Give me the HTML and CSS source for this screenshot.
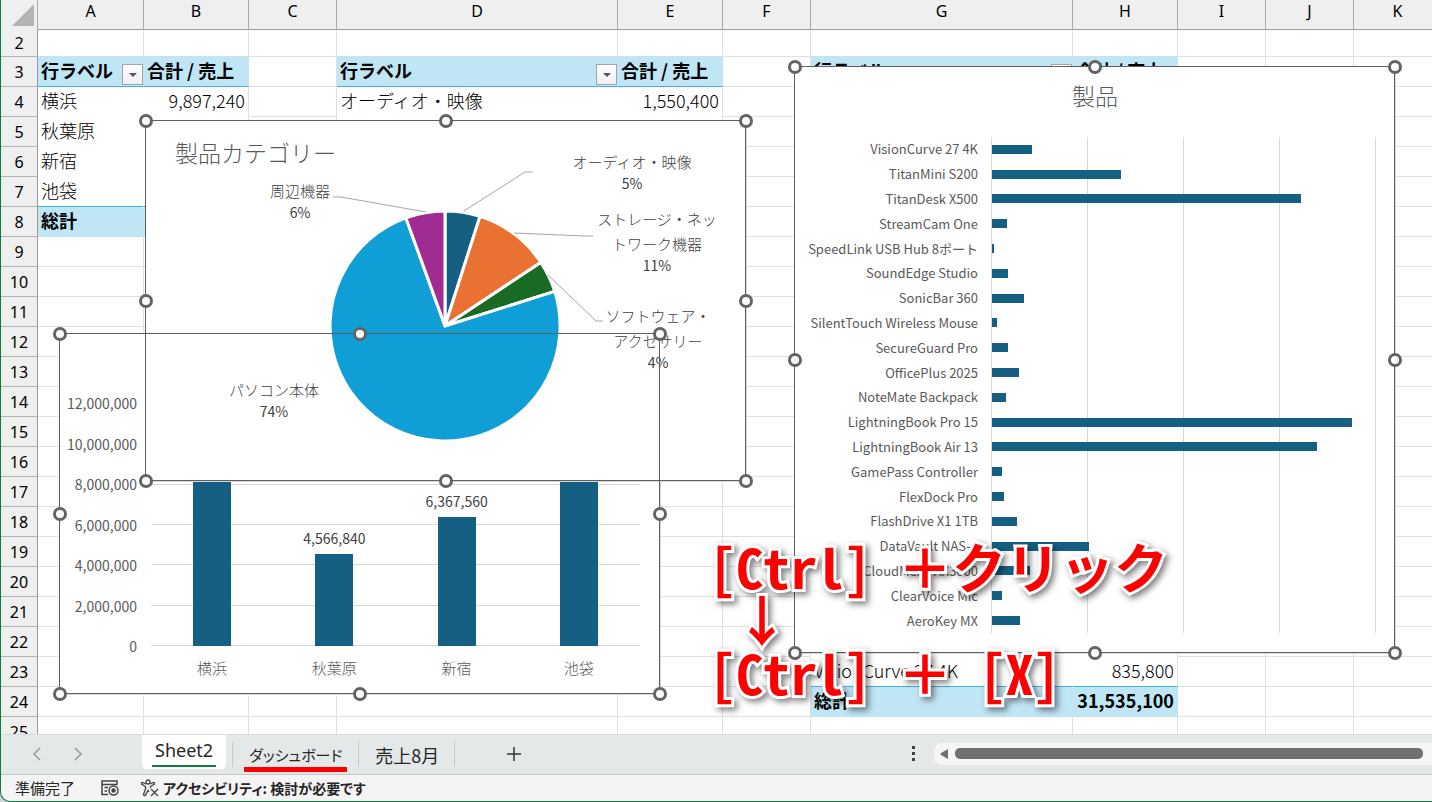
FILE: index.html
```html
<!DOCTYPE html>
<html lang="ja">
<head>
  <meta charset="UTF-8">
  <title>Sheet2</title>
  <meta name="viewport" content="width=device-width, initial-scale=1.0">
  <link rel="stylesheet" href="styles.css">
</head>
<body>
  <div class="app">
    <main class="sheet">
      <table class="cells">
        <colgroup>
          <col class="w-head"><col class="w-a"><col class="w-sum"><col class="w-std"><col class="w-d"><col class="w-sum">
          <col class="w-std"><col class="w-g"><col class="w-sum"><col class="w-std"><col class="w-std"><col class="w-std">
        </colgroup>
        <thead>
          <tr>
            <th class="corner"><svg width="36" height="29"><path d="M33 4V26H11Z" fill="#b4b4b4"/></svg></th>
            <th>A</th><th>B</th><th>C</th><th>D</th><th>E</th><th>F</th><th>G</th><th>H</th><th>I</th><th>J</th><th>K</th>
          </tr>
        </thead>
        <tbody id="rows"></tbody>
      </table>

      <section class="chart chart-store">
        <div class="y-axis">
          <span>12,000,000</span><span>10,000,000</span><span>8,000,000</span><span>6,000,000</span><span>4,000,000</span><span>2,000,000</span><span>0</span>
        </div>
        <div class="plot">
          <div class="h-lines"><i></i><i></i><i></i><i></i><i></i><i></i><i></i></div>
          <div class="columns" id="columns"></div>
        </div>
        <div class="x-axis"><span>横浜</span><span>秋葉原</span><span>新宿</span><span>池袋</span></div>
      </section>

      <section class="chart chart-category">
        <svg class="pie" viewBox="0 0 600 360">
          <g stroke="#fff" stroke-width="3" stroke-linejoin="round">
            <path fill="#156082" d="M299 205V90A115 115 0 0 1 334 95.4Z"/>
            <path fill="#e97132" d="M299 205L334 95.4A115 115 0 0 1 394.8 141.4Z"/>
            <path fill="#196b24" d="M299 205L394.8 141.4A115 115 0 0 1 408.7 170.4Z"/>
            <path fill="#0f9ed5" d="M299 205L408.7 170.4A115 115 0 1 1 259.9 96.9Z"/>
            <path fill="#a02b93" d="M299 205L259.9 96.9A115 115 0 0 1 299 90Z"/>
          </g>
          <g fill="none" stroke="#a6a6a6">
            <path d="M318 90L379 51H387"/>
            <path d="M187 76H195L280 91"/>
            <path d="M368 112L439 115H447"/>
            <path d="M402 154L450 200H457"/>
          </g>
          <text class="chart-title" x="29" y="41">製品カテゴリー</text>
          <g class="pie-label">
            <text x="486" y="47">オーディオ・映像</text><text class="pct" x="486" y="68">5%</text>
            <text x="154" y="76">周辺機器</text><text class="pct" x="154" y="97">6%</text>
            <text x="511" y="104">ストレージ・ネッ</text><text x="511" y="129">トワーク機器</text><text class="pct" x="511" y="150">11%</text>
            <text x="512" y="201">ソフトウェア・</text><text x="512" y="226">アクセサリー</text><text class="pct" x="512" y="247">4%</text>
            <text x="128" y="275">パソコン本体</text><text class="pct" x="128" y="296">74%</text>
          </g>
        </svg>
      </section>

      <section class="chart chart-product">
        <h2 class="chart-title">製品</h2>
        <div class="bars">
          <div class="v-lines"><i></i><i></i><i></i><i></i><i></i></div>
          <div class="bar-list" id="bars"></div>
        </div>
      </section>

      <div class="selection sel-category"></div>
      <div class="selection sel-store"></div>
      <div class="selection sel-product"></div>

      <div class="note">
        <div>[Ctrl] ＋クリック</div>
        <div class="note-arrow">↓</div>
        <div>[Ctrl] ＋ [X]</div>
      </div>
    </main>

    <nav class="tabs">
      <div class="tab-nav">
        <button aria-label="前のシート"><svg width="10" height="14"><path d="M8 1L2 7L8 13"/></svg></button>
        <button aria-label="次のシート"><svg width="10" height="14"><path d="M2 1L8 7L2 13"/></svg></button>
      </div>
      <button class="tab active"><span>Sheet2</span></button>
      <button class="tab marked"><span>ダッシュボード</span></button>
      <button class="tab"><span>売上8月</span></button>
      <button class="add" aria-label="新しいシート"><svg width="16" height="16"><path d="M8 1V15M1 8H15"/></svg></button>
      <div class="scroll">
        <svg width="4" height="15" fill="#444"><path d="M0 0h3v3H0zM0 6h3v3H0zM0 12h3v3H0z"/></svg>
        <div class="track">
          <svg width="9" height="12"><path d="M8 1V11L1 7Q0 6 1 5Z" fill="#707070"/></svg>
          <div class="thumb"></div>
        </div>
      </div>
    </nav>

    <footer class="status">
      <span>準備完了</span>
      <svg class="macro" width="20" height="18" viewBox="0 0 20 18" fill="none" stroke="#444" stroke-width="1.5">
        <path d="M8 15.500H2V2H17V6M2 5.500H17M4.500 8.500H8M4.500 12H7"/>
        <circle cx="13.500" cy="11.500" r="4.500"/><circle cx="13.500" cy="11.500" r="1.500" fill="#444"/>
      </svg>
      <button class="access">
        <svg width="20" height="18" viewBox="0 0 20 18" fill="none" stroke="#444" stroke-width="1.300">
          <circle cx="8" cy="3" r="2"/>
          <path d="M6 5L2.500 3.500Q1 3.500 1.500 5L5.500 7.500V10L3.500 15.500Q4 17.500 5.500 16L8 11.500L9 13M10 5L13.500 3.500Q15 3.500 14.500 5L10.500 7.500V9"/>
          <path d="M11 10L18 17M18 10L11 17"/>
        </svg>
        アクセシビリティ: 検討が必要です
      </button>
    </footer>
  </div>

  <script>
    const cols = ['A','B','C','D','E','F','G','H','I','J','K'];

    // text of the pivot tables
    const values = {
      A3: '行ラベル', B3: '合計 / 売上', D3: '行ラベル', E3: '合計 / 売上', G3: '行ラベル', H3: '合計 / 売上',
      A4: '横浜', B4: '9,897,240', D4: 'オーディオ・映像', E4: '1,550,400',
      A5: '秋葉原', A6: '新宿', A7: '池袋', A8: '総計',
      G23: 'VisionCurve 27 4K', H23: '835,800', G24: '総計', H24: '31,535,100'
    };

    // columns and last row of each pivot table
    const pivots = [['AB', 8], ['DE', 9], ['GH', 24]];

    function cellClass(col, row) {
      for (const [range, last] of pivots) {
        if (!range.includes(col)) continue;
        const edge = col === range[1] ? ' edge' : '';
        if (row === 2) return 'above' + edge;
        if (row === 3) return 'fill head' + edge;
        if (row === last) return 'fill total' + edge;
        if (row > 3 && row < last) return 'pivot' + (row === last - 1 ? ' last' : '') + edge;
      }
      return '';
    }

    let html = '';
    for (let r = 2; r <= 25; r++) {
      html += `<tr><th>${r}</th>`;
      cols.forEach(c => {
        const text = values[c + r] || '';
        const num = /^[\d,]+$/.test(text) ? ' num' : '';
        const filter = r === 3 && 'ADG'.includes(c) ? '<button class="filter" aria-label="フィルター"></button>' : '';
        html += `<td class="${cellClass(c, r)}${num}">${filter}${text}</td>`;
      });
      html += '</tr>';
    }
    document.getElementById('rows').innerHTML = html;

    // sales per store
    const stores = [9897240, 4566840, 6367560, 10703460];
    document.getElementById('columns').innerHTML = stores.map(v =>
      `<div class="column"><span>${v.toLocaleString('en-US')}</span><b style="height:${v / 120000}%"></b></div>`).join('');

    // sales per product, in ten thousands
    const products = [
      ['VisionCurve 27 4K', 83], ['TitanMini S200', 269], ['TitanDesk X500', 644], ['StreamCam One', 31],
      ['SpeedLink USB Hub 8ポート', 5], ['SoundEdge Studio', 33], ['SonicBar 360', 67], ['SilentTouch Wireless Mouse', 11],
      ['SecureGuard Pro', 33], ['OfficePlus 2025', 56], ['NoteMate Backpack', 29], ['LightningBook Pro 15', 750],
      ['LightningBook Air 13', 677], ['GamePass Controller', 21], ['FlexDock Pro', 25], ['FlashDrive X1 1TB', 52],
      ['DataVault NAS-4', 202], ['CloudMesh AX3000', 79], ['ClearVoice Mic', 21], ['AeroKey MX', 58]
    ];
    document.getElementById('bars').innerHTML = products.map(([name, v]) =>
      `<span>${name}</span><div><b style="width:${v / 8}%"></b></div>`).join('');

    // nine grid places, the middle one stays empty
    document.querySelectorAll('.selection').forEach(s => {
      s.innerHTML = '<i></i>'.repeat(9);
    });
  </script>
</body>
</html>
```
FILE: styles.css
```css
* {
  box-sizing: border-box;
}
body {
  margin: 0;
  background: #cfd2d3;
  font-family: "Noto Sans CJK JP", sans-serif;
  color: #000;
}
button {
  border: none;
  background: none;
  padding: 0;
  margin: 0;
  font: inherit;
  color: inherit;
}
.app {
  height: 100vh;
  display: flex;
  flex-direction: column;
  overflow: hidden;
  background: #f4f4f4;
  border-left: 1px solid #107c41;
  border-bottom: 1px solid #107c41;
  border-bottom-left-radius: 10px;
}
.sheet {
  position: relative;
  flex: 1;
  min-height: 0;
  overflow: hidden;
  background: #fff;
}

/* cells */
.cells {
  table-layout: fixed;
  width: 1441px;
  border-collapse: separate;
  border-spacing: 0;
  font-size: 18px;
  line-height: 26px;
}
.w-head { width: 37px; }
.w-a { width: 106px; }
.w-sum { width: 105px; }
.w-std { width: 88px; }
.w-d { width: 281px; }
.w-g { width: 262px; }
.cells th {
  padding: 0;
  height: 30px;
  background: #efefef;
  border-bottom: 1px solid #b4b4b4;
  border-right: 1px solid #999;
  font-family: "Noto Sans", sans-serif;
  font-size: 16px;
  font-weight: 400;
}
.cells thead th {
  border-color: #999;
  border-right-color: #a9a9a9;
  line-height: 22px;
  vertical-align: top;
}
.cells .corner {
  border-bottom-color: #efefef;
}
.corner svg {
  display: block;
}
.cells td {
  height: 30px;
  padding: 0 3px 3px;
  border-right: 1px solid #e0e0e0;
  border-bottom: 1px solid #e0e0e0;
  font-weight: 300;
  white-space: nowrap;
  overflow: hidden;
}
.cells tbody tr:first-child > * {
  height: 27px;
  line-height: 22px;
}
.cells .above {
  border-bottom-color: #c0e6f5;
}
.cells .pivot {
  border-color: #fff;
}
.cells .fill {
  background: #c0e6f5;
  border-color: #c0e6f5;
  font-weight: 700;
}
.cells .head,
.cells .last {
  border-bottom-color: #44b3e1;
}
.cells .pivot.edge {
  border-right-color: #e0e0e0;
}
.cells .num {
  text-align: right;
}
.filter {
  float: right;
  width: 21px;
  height: 21px;
  margin: 7px -3px -3px 0;
  border: 1px solid #a3a3ab;
  background: linear-gradient(#fff, #eeeef4);
  display: flex;
  align-items: center;
  justify-content: center;
}
.filter::after {
  content: "";
  border: 4px solid transparent;
  border-top-color: #555;
  border-bottom: none;
}

/* charts lie over the cells */
.chart {
  position: absolute;
  background: #fff;
  outline: 1px solid #d9d9d9;
  color: #595959;
  font-size: 14px;
  line-height: 20px;
}
.chart-title {
  margin: 0;
  font-size: 23px;
  font-weight: 300;
  line-height: 32px;
  fill: #595959;
}
.chart b {
  display: block;
  background: #156082;
}
.chart-store {
  left: 59px;
  top: 334px;
  width: 600px;
  height: 360px;
  padding: 59px 20px 0 7px;
  display: grid;
  grid-template-columns: 70px 1fr;
  grid-template-rows: 263px 1fr;
  column-gap: 14px;
}
.y-axis {
  display: flex;
  flex-direction: column;
  justify-content: space-between;
  text-align: right;
}
.plot {
  display: grid;
  padding: 10px 0;
}
.h-lines,
.columns {
  grid-area: 1 / 1;
  height: 243px;
}
.h-lines {
  display: flex;
  flex-direction: column;
  justify-content: space-between;
}
.h-lines i {
  height: 1px;
  background: #d9d9d9;
}
.columns {
  display: flex;
}
.column {
  flex: 1;
  display: flex;
  flex-direction: column;
  justify-content: flex-end;
  align-items: center;
  color: #404040;
}
.column span {
  margin-bottom: 6px;
}
.column b {
  width: 38px;
  flex-shrink: 0;
}
.x-axis {
  grid-column: 2;
  display: flex;
  padding-top: 2px;
  font-size: 15px;
  font-weight: 300;
}
.x-axis span {
  flex: 1;
  text-align: center;
}
.chart-category {
  left: 145px;
  top: 121px;
  width: 600px;
  height: 360px;
}
.pie {
  display: block;
  width: 100%;
}
.pie-label {
  font-size: 15px;
  font-weight: 300;
  fill: #404040;
  text-anchor: middle;
}
.pct {
  font-size: 14px;
  font-weight: 400;
}
.chart-product {
  left: 794px;
  top: 67px;
  width: 600px;
  height: 586px;
  padding: 12px 0 20px;
  display: flex;
  flex-direction: column;
  gap: 26px;
  font-size: 13px;
  text-align: center;
}
.bars {
  flex: 1;
  display: grid;
  padding-right: 19px;
}
.v-lines {
  grid-area: 1 / 1;
  margin-left: 196px;
  display: flex;
  justify-content: space-between;
}
.v-lines i {
  width: 1px;
  background: #d9d9d9;
}
.bar-list {
  grid-area: 1 / 1;
  display: grid;
  grid-template-columns: 183px 1fr;
  grid-auto-rows: 1fr;
  column-gap: 14px;
  align-items: center;
  text-align: right;
  white-space: nowrap;
}
.bar-list span {
  justify-self: end;
}
.bar-list b {
  height: 9px;
}

/* selection frames with their handles */
.selection {
  position: absolute;
  width: 601px;
  height: 361px;
  border: 1px solid #5f5f5f;
  display: grid;
  grid-template-columns: repeat(3, 14px);
  grid-template-rows: repeat(3, 14px);
  justify-content: space-between;
  align-content: space-between;
}
.selection i {
  width: 14px;
  height: 14px;
  border: 3px solid #636363;
  border-radius: 50%;
  background: #fff;
}
.selection i:nth-child(5) {
  visibility: hidden;
}
.sel-category { left: 144px; top: 120px; }
.sel-store { left: 58px; top: 333px; }
.sel-product { left: 793px; top: 66px; height: 587px; }
.selection i:nth-child(3n+1) { margin-left: -7px; }
.selection i:nth-child(3n) { margin-left: 8px; }
.selection i:nth-child(-n+3) { margin-top: -7px; }
.selection i:nth-child(n+7) { margin-top: 8px; }

.note {
  position: absolute;
  left: 708px;
  top: 539px;
  font-family: "Noto Sans Mono CJK JP", "Noto Sans CJK JP", monospace;
  font-size: 54px;
  font-weight: 700;
  line-height: 53px;
  color: #f00;
  white-space: nowrap;
  -webkit-text-stroke: 6px #fff;
  paint-order: stroke fill;
  filter: drop-shadow(3px 3px 3px rgba(0,0,0,0.5));
}
.note-arrow {
  padding-left: 26px;
}

/* sheet tabs */
.tabs {
  flex: none;
  height: 40px;
  padding-bottom: 2px;
  display: flex;
  background: #e4e8e9;
  border-top: 1px solid #d9dcdd;
  color: #262626;
  font-size: 18px;
}
.tabs svg {
  display: block;
}
.tab-nav {
  width: 141px;
  display: flex;
  align-items: center;
  gap: 31px;
  padding-left: 31px;
}
.tab-nav path {
  fill: none;
  stroke: #999;
  stroke-width: 1.5;
}
.tab {
  height: 34px;
  padding: 0 16px;
  position: relative;
  display: flex;
  align-items: flex-start;
}
.tab span {
  line-height: 26px;
  padding-top: 7px;
}
.tab.active {
  background: #fff;
  border-radius: 0 0 5px 5px;
  padding: 0 10px;
  margin-right: 6px;
  font-family: "Noto Sans", sans-serif;
}
.tab.active span {
  padding: 0 3px;
  line-height: 30px;
  border-bottom: 2px solid #107c41;
}
.tab:not(.active)::after,
.tab.marked::before {
  content: "";
  position: absolute;
  right: 0;
  top: 7px;
  height: 25px;
  border-right: 1px solid #c6c9ca;
}
.tab.marked::before {
  left: 0;
  right: auto;
}
.tab.marked {
  padding: 0 12px;
  font-size: 15px;
  font-feature-settings: "palt";
}
.tab.marked span {
  padding: 7px 5px 0;
  height: 37px;
  border-bottom: 5px solid #f00;
}
.add {
  padding: 0 51px;
}
.add path {
  fill: none;
  stroke: #333;
  stroke-width: 1.5;
}
.scroll {
  margin-left: auto;
  width: 520px;
  display: flex;
  align-items: center;
  gap: 18px;
}
.track {
  flex: 1;
  height: 22px;
  padding: 0 9px 0 6px;
  display: flex;
  align-items: center;
  gap: 6px;
  background: #f5f5f5;
  border-radius: 8px 0 0 8px;
}
.thumb {
  flex: 1;
  height: 11px;
  border-radius: 5px;
  background: #707070;
}

.status {
  flex: none;
  height: 27px;
  display: flex;
  align-items: center;
  padding-left: 14px;
  border-top: 1px solid #c6c6c6;
  color: #262626;
  font-size: 15px;
  line-height: 24px;
}
.macro {
  margin: 0 20px 0 25px;
}
.access {
  display: flex;
  align-items: center;
  gap: 3px;
  font-size: 14px;
  font-weight: 700;
  font-feature-settings: "palt";
}
```
